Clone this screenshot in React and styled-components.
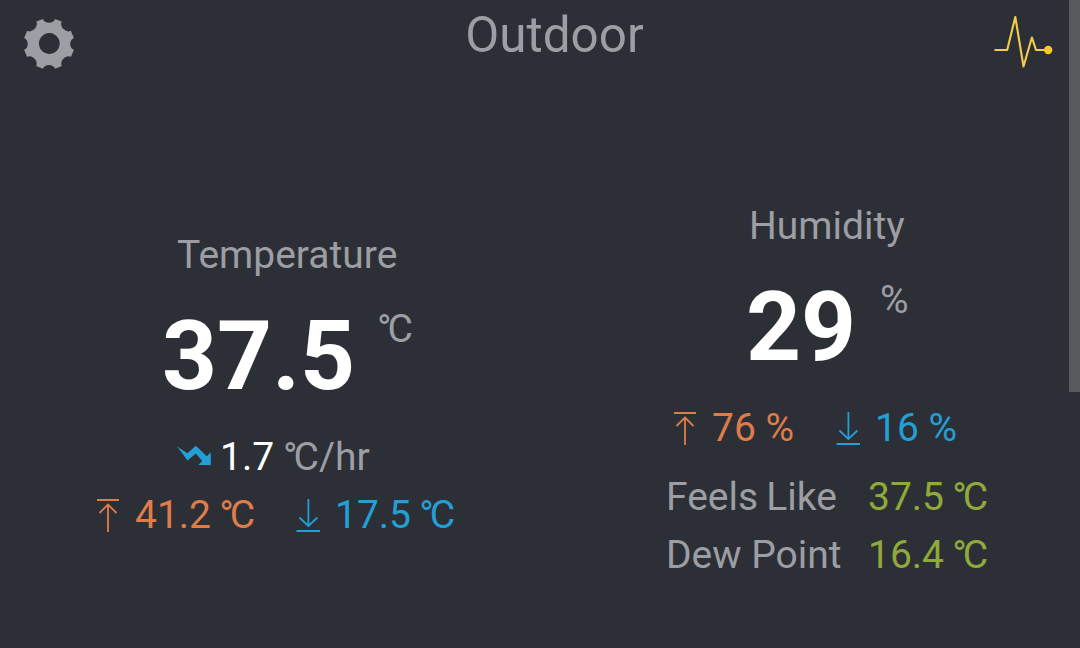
import styled, { createGlobalStyle } from 'styled-components';

const GlobalStyle = createGlobalStyle`
  * {
    box-sizing: border-box;
  }
  body {
    margin: 0;
    overflow: hidden;
    background: #2c2f36;
  }
`;

const Screen = styled.div`
  display: flex;
  width: 1080px;
  height: 648px;
  background: #2c2f36;
  color: #9c9ea3;
  font-family: Roboto, 'Noto Sans CJK SC', sans-serif;
  font-size: 39px;
  line-height: 58px;
  white-space: nowrap;
`;

const Page = styled.main`
  flex: 1;
`;

const ScrollTrack = styled.div`
  width: 11px;
`;

const ScrollThumb = styled.div`
  height: 392px;
  background: #58595d;
`;

const Header = styled.header`
  display: flex;
  justify-content: space-between;
  height: 90px;
  padding: 0 16px 0 24px;

  svg {
    display: block;
  }
`;

const Title = styled.h1`
  margin: 6px 0 0 42px;
  font-size: 49.4px;
  font-weight: 400;
`;

const IconSlot = styled.div`
  padding-top: ${(props) => props.$top}px;
`;

const Columns = styled.div`
  display: grid;
  grid-template-columns: 540px 1fr;
`;

const Sensor = styled.section`
  padding-top: ${(props) => props.$top}px;
`;

const Row = styled.div`
  display: flex;
  height: 58px;
  margin-top: ${(props) => props.$gap || 0}px;
  padding-left: ${(props) => props.$indent}px;
`;

const Reading = styled(Row)`
  height: 144px;
`;

const Value = styled.strong`
  width: ${(props) => props.$width}px;
  color: #fff;
  font-size: 96px;
  font-weight: 700;
  line-height: 145px;
`;

const Unit = styled.span`
  padding-top: 16px;
`;

const Text = styled.span`
  width: ${(props) => (props.$width ? `${props.$width}px` : 'auto')};
  color: ${(props) => props.$color || 'inherit'};
`;

const Temp = styled(Text)`
  word-spacing: -1.5px;
`;

const Degree = styled.span`
  letter-spacing: -4px;
`;

const Glyph = styled.svg`
  flex: none;
  margin-top: ${(props) => props.$top}px;
  margin-right: ${(props) => props.$space}px;
`;

const ORANGE = '#de7c4a';
const BLUE = '#239fd6';
const GREEN = '#8fa93a';

function Celsius() {
  return (
    <>
      <Degree>°</Degree>C
    </>
  );
}

function GearIcon() {
  return (
    <svg width="50" height="50" viewBox="0 0 50 50">
      <path
        fill="#9c9ea3"
        fillRule="evenodd"
        d="M12.3 2.6 L19 0 C20 5 30 5 31 0 L37.7 2.6 C35 7.5 42 14.5 46.8 11.8 L49.9 19 C45 20.5 45 29.5 49.9 30.8 L47 37.8 C42 35.2 35.2 42 37.8 47 L31 49.8 C29.5 44.8 20.5 44.8 19 49.8 L12.2 47 C14.8 42 8 35.2 3 37.8 L0.1 30.8 C5 29.5 5 20.5 0.1 19 L3.2 11.8 C8 14.5 15 7.5 12.3 2.6 Z M25.3 14.1 a10.4 10.4 0 1 0 0.01 0 Z"
      />
    </svg>
  );
}

function PulseIcon() {
  return (
    <svg width="60" height="54" viewBox="0 0 60 54">
      <path
        d="M1.5 35 H14.2 L22.3 2 L30.5 51.5 L38.9 22.5 L43 35 H52"
        fill="none"
        stroke="#f3cc4c"
        strokeWidth="2.1"
        strokeLinejoin="round"
      />
      <circle cx="55.2" cy="35" r="4.2" fill="#fcc729" />
    </svg>
  );
}

function MaxIcon() {
  return (
    <Glyph $top={12} $space={15} width="24" height="34" viewBox="0 0 24 34">
      <path d="M1 2 H23 M12 34 V6.5 M3.5 15 L12 6.5 L20.5 15" fill="none" stroke={ORANGE} strokeWidth="1.8" />
    </Glyph>
  );
}

function MinIcon() {
  return (
    <Glyph $top={12} $space={15} width="24" height="34" viewBox="0 0 24 34">
      <path d="M0.5 33 H24 M12.4 1 V28 M3.4 19.5 L12.4 28 L21.4 19.5" fill="none" stroke={BLUE} strokeWidth="1.8" />
    </Glyph>
  );
}

function TrendIcon() {
  return (
    <Glyph $top={17} $space={9} width="34" height="22" viewBox="0 0 34 22">
      <path
        d="M0 1.2 L10.3 8.2 L18.9 0.8 L29.8 11.2 L33.8 7.2 V20 H21.3 L25.3 16 L18.8 8.6 L10.5 15.6 Z"
        fill={BLUE}
      />
    </Glyph>
  );
}

function MinMax({ indent, max, min, maxWidth, unit }) {
  const Amount = unit ? Text : Temp;

  return (
    <Row $indent={indent}>
      <MaxIcon />
      <Amount $width={maxWidth} $color={ORANGE}>
        {max} {unit || <Celsius />}
      </Amount>
      <MinIcon />
      <Amount $color={BLUE}>
        {min} {unit || <Celsius />}
      </Amount>
    </Row>
  );
}

function App() {
  return (
    <Screen>
      <GlobalStyle />
      <Page>
        <Header>
          <IconSlot $top={19}>
            <GearIcon />
          </IconSlot>
          <Title>Outdoor</Title>
          <IconSlot $top={15}>
            <PulseIcon />
          </IconSlot>
        </Header>
        <Columns>
          <Sensor $top={136}>
            <Row $indent={177}>Temperature</Row>
            <Reading $indent={162}>
              <Value $width={215}>37.5</Value>
              <Unit>
                <Celsius />
              </Unit>
            </Reading>
            <Row $indent={177}>
              <TrendIcon />
              <Text $width={63} $color="#fff">1.7</Text>
              <Text>
                <Celsius />
                /hr
              </Text>
            </Row>
            <MinMax indent={96} max="41.2" min="17.5" maxWidth={161} />
          </Sensor>
          <Sensor $top={107}>
            <Row $indent={209}>Humidity</Row>
            <Reading $indent={206}>
              <Value $width={134}>29</Value>
              <Unit>%</Unit>
            </Reading>
            <MinMax indent={133} max="76" min="16" maxWidth={124} unit="%" />
            <Row $indent={126} $gap={11}>
              <Temp $width={202}>Feels Like</Temp>
              <Temp $color={GREEN}>
                37.5 <Celsius />
              </Temp>
            </Row>
            <Row $indent={126}>
              <Text $width={202}>Dew Point</Text>
              <Temp $color={GREEN}>
                16.4 <Celsius />
              </Temp>
            </Row>
          </Sensor>
        </Columns>
      </Page>
      <ScrollTrack>
        <ScrollThumb />
      </ScrollTrack>
    </Screen>
  );
}

export default App;
